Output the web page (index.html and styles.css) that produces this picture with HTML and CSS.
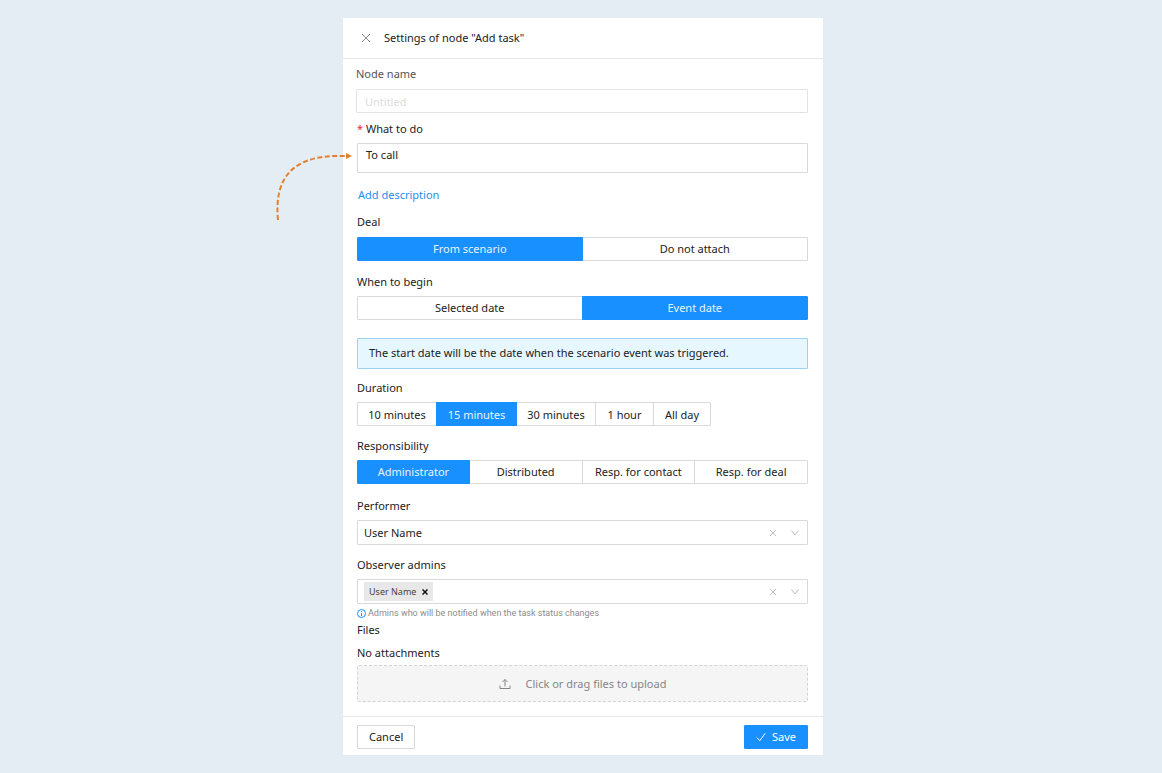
FILE: index.html
```html
<!DOCTYPE html>
<html lang="en">
<head>
<meta charset="utf-8">
<meta name="viewport" content="width=device-width, initial-scale=1">
<title>Settings of node "Add task"</title>
<link rel="stylesheet" href="styles.css">
</head>
<body>
<main class="panel">
  <svg class="pointer" viewBox="0 0 80 72" aria-hidden="true">
    <path d="M5 68C1 27 18 2 72 4" fill="none" stroke="#e0822f" stroke-width="2" stroke-dasharray="5 2.5"/>
    <path d="M73 1L79 4L73 7Z" fill="#e0822f"/>
  </svg>
  <header class="header">
    <button class="icon-button close" type="button" aria-label="Close">
      <svg viewBox="0 0 10 10"><path d="M1 1L9 9M9 1L1 9"/></svg>
    </button>
    <h1 class="title">Settings of node "Add task"</h1>
  </header>
  <form class="form">
    <div class="field name-field">
      <label class="label muted" for="node-name">Node name</label>
      <input class="input" id="node-name" type="text" placeholder="Untitled">
    </div>
    <div class="field task-field">
      <label class="label" for="task"><span class="required">*</span> What to do</label>
      <textarea class="textarea" id="task" rows="1">To call</textarea>
    </div>
    <a class="link" href="#description">Add description</a>
    <fieldset class="field deal-field">
      <legend class="label">Deal</legend>
      <div class="segments halves">
        <label class="segment"><input type="radio" name="deal" checked>From scenario</label>
        <label class="segment"><input type="radio" name="deal">Do not attach</label>
      </div>
    </fieldset>
    <fieldset class="field begin-field">
      <legend class="label">When to begin</legend>
      <div class="segments halves">
        <label class="segment"><input type="radio" name="begin">Selected date</label>
        <label class="segment"><input type="radio" name="begin" checked>Event date</label>
      </div>
    </fieldset>
    <p class="alert">The start date will be the date when the scenario event was triggered.</p>
    <fieldset class="field duration-field">
      <legend class="label">Duration</legend>
      <div class="segments compact">
        <label class="segment"><input type="radio" name="duration">10 minutes</label>
        <label class="segment"><input type="radio" name="duration" checked>15 minutes</label>
        <label class="segment"><input type="radio" name="duration">30 minutes</label>
        <label class="segment"><input type="radio" name="duration">1 hour</label>
        <label class="segment"><input type="radio" name="duration">All day</label>
      </div>
    </fieldset>
    <fieldset class="field responsibility-field">
      <legend class="label">Responsibility</legend>
      <div class="segments quarters">
        <label class="segment"><input type="radio" name="resp" checked>Administrator</label>
        <label class="segment"><input type="radio" name="resp">Distributed</label>
        <label class="segment"><input type="radio" name="resp">Resp. for contact</label>
        <label class="segment"><input type="radio" name="resp">Resp. for deal</label>
      </div>
    </fieldset>
    <div class="field performer-field">
      <label class="label" for="performer">Performer</label>
      <div class="select-box">
        <select class="select" id="performer"><option>User Name</option></select>
        <button class="icon-button" type="button" aria-label="Clear performer"><svg viewBox="0 0 8 8"><path d="M1 1L7 7M7 1L1 7"/></svg></button>
        <svg class="chevron" viewBox="0 0 8 8" aria-hidden="true"><path d="M0.5 1.5L4 6L7.5 1.5"/></svg>
      </div>
    </div>
    <div class="field observer-field">
      <label class="label" for="observers">Observer admins</label>
      <div class="select-box">
        <span class="tag">User Name
          <button class="tag-remove" type="button" aria-label="Remove User Name"><svg viewBox="0 0 6 6"><path d="M0.5 0.5L5.5 5.5M5.5 0.5L0.5 5.5"/></svg></button>
        </span>
        <input class="select" id="observers" type="text">
        <button class="icon-button" type="button" aria-label="Clear observers"><svg viewBox="0 0 8 8"><path d="M1 1L7 7M7 1L1 7"/></svg></button>
        <svg class="chevron" viewBox="0 0 8 8" aria-hidden="true"><path d="M0.5 1.5L4 6L7.5 1.5"/></svg>
      </div>
      <p class="hint">
        <svg class="info" viewBox="0 0 9 9" aria-hidden="true"><circle cx="4.5" cy="4.5" r="4"/><path d="M4.5 4V7M4.5 2V3"/></svg>
        Admins who will be notified when the task status changes
      </p>
    </div>
    <h2 class="label files-title">Files</h2>
    <p class="label attachments">No attachments</p>
    <button class="dropzone" type="button">
      <svg class="upload" viewBox="0 0 12 12" aria-hidden="true"><path d="M1 7.5V10.5H11V7.5M6 8.5V1.5M3.5 4L6 1.5L8.5 4"/></svg>
      Click or drag files to upload
    </button>
  </form>
  <footer class="footer">
    <button class="button" type="button">Cancel</button>
    <button class="button primary" type="button"><svg class="check" viewBox="0 0 10 10" aria-hidden="true"><path d="M0.8 5.5L3.8 8.7L9.2 1.2"/></svg>Save</button>
  </footer>
</main>
</body>
</html>
```
FILE: styles.css
```css
* { box-sizing: border-box; }

body {
  margin: 0;
  padding: 18px 0 18px 4px;
  background: #e4ecf4;
  color: #222;
  font-family: "Noto Sans", "Open Sans", sans-serif;
  font-size: 11px;
  line-height: 16px;
}

button, input, textarea, select { font: inherit; color: inherit; }
button { cursor: pointer; }
p, h1, h2, fieldset { margin: 0; }
svg { display: block; fill: none; stroke: currentColor; }

.panel {
  position: relative;
  max-width: 480px;
  margin: 0 auto;
  background: #fff;
}

.pointer {
  position: absolute;
  top: 134px;
  left: -70px;
  width: 80px;
  height: 72px;
  stroke: none;
}

.header {
  display: flex;
  align-items: center;
  gap: 13px;
  padding: 12px 18px;
  border-bottom: 1px solid #e8e8e8;
}

.title { font-size: 11px; font-weight: 400; line-height: 16px; }

.icon-button {
  padding: 0;
  border: 0;
  background: none;
  color: #bfbfbf;
}
.icon-button svg { width: 8px; height: 8px; }
.icon-button.close { color: #8c8c8c; }
.icon-button.close svg { width: 10px; height: 10px; }

.form {
  display: flex;
  flex-direction: column;
  padding: 7px 15px 14px 14px;
}

.field {
  display: flex;
  flex-direction: column;
  min-width: 0;
  padding: 0;
  border: 0;
}

.label {
  padding: 0;
  margin: 0 0 6px;
  font-size: 11px;
  font-weight: 400;
  line-height: 16px;
}
.muted { color: #555; }
.required { color: #f5222d; }

.name-field { margin-left: -1px; }
.name-field .label { margin-bottom: 7px; }

.input, .textarea {
  width: 100%;
  border: 1px solid #d9d9d9;
  border-radius: 1px;
  background: #fff;
}
.input { height: 24px; padding: 1px 8px 0; border-color: #e3e3e3; }
.input::placeholder { color: #dcdcdc; }
.textarea { display: block; height: 30px; padding: 3px 8px; resize: none; overflow: hidden; }

.task-field { margin-top: 8px; }

.link {
  align-self: flex-start;
  margin: 14px 0 0 1px;
  color: #1f8fea;
  text-decoration: none;
}

.deal-field { margin-top: 11px; }
.deal-field .label { margin-bottom: 7px; }
.begin-field { margin-top: 13px; }

.segments { display: grid; }
.halves { grid-template-columns: 1fr 1fr; }
.quarters { grid-template-columns: repeat(4, 1fr); }
.compact { grid-template-columns: 80px 80px 79px 58px 57px; }

.segment {
  position: relative;
  padding: 3px 0;
  border: 1px solid #d9d9d9;
  text-align: center;
  white-space: nowrap;
  cursor: pointer;
}
.segment + .segment { margin-left: -1px; }
.segment:first-child { border-radius: 1px 0 0 1px; }
.segment:last-child { border-radius: 0 1px 1px 0; }
.segment:has(:checked) { z-index: 1; border-color: #1890ff; background: #1890ff; color: #e6f4ff; }
.segment input { position: absolute; opacity: 0; margin: 0; }
.compact .segment { padding: 4px 0 2px; }

.alert {
  margin-top: 18px;
  padding: 6px 11px 7px;
  border: 1px solid #9bd3f0;
  border-radius: 1px;
  background: #e6f7ff;
}

.duration-field { margin-top: 11px; }
.responsibility-field { margin-top: 12px; }
.performer-field { margin-top: 14px; }
.observer-field { margin-top: 12px; }

.select-box {
  display: flex;
  align-items: center;
  height: 25px;
  padding: 0 8px 0 6px;
  border: 1px solid #d9d9d9;
  border-radius: 1px;
}
.select {
  flex: 1;
  min-width: 0;
  padding: 0;
  border: 0;
  background: none;
  appearance: none;
  outline: 0;
}
.chevron { width: 8px; height: 8px; margin-left: 14px; color: #bfbfbf; }

.tag {
  display: flex;
  align-items: center;
  gap: 6px;
  height: 19px;
  padding: 0 5px;
  background: #e8e8e8;
  color: #444;
  font-size: 9px;
}
.tag-remove { padding: 0; border: 0; background: none; color: #111; }
.tag-remove svg { width: 6px; height: 6px; stroke-width: 1.5; }

.hint {
  display: flex;
  align-items: center;
  gap: 2px;
  margin-top: 2px;
  color: #8c8c8c;
  font-family: Roboto, "Open Sans", sans-serif;
  font-size: 9px;
  line-height: 14px;
}
.info { width: 9px; height: 9px; color: #1890ff; }

.files-title { margin: 2px 0 7px; }
.attachments { margin-bottom: 4px; }

.dropzone {
  display: flex;
  align-items: center;
  justify-content: center;
  gap: 15px;
  height: 37px;
  border: 1px dashed #d4d4d4;
  border-radius: 2px;
  background: #f5f5f5;
  color: #858585;
  font-size: 11px;
}
.upload { width: 12px; height: 12px; }

.footer {
  display: flex;
  justify-content: space-between;
  padding: 8px 15px 6px 14px;
  border-top: 1px solid #e8e8e8;
}
.button {
  display: flex;
  align-items: center;
  gap: 6px;
  height: 24px;
  padding: 0 11px;
  border: 1px solid #d9d9d9;
  border-radius: 1px;
  background: #fff;
}
.primary { border-color: #1890ff; background: #1890ff; color: #fff; }
.check { width: 10px; height: 10px; }
```
